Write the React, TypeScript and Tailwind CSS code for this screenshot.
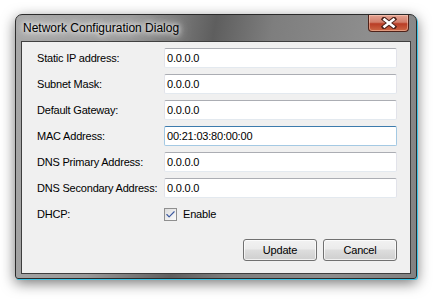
import { Check } from 'lucide-react';

const fields = [
  { label: 'Static IP address:', value: '0.0.0.0' },
  { label: 'Subnet Mask:', value: '0.0.0.0' },
  { label: 'Default Gateway:', value: '0.0.0.0' },
  { label: 'MAC Address:', value: '00:21:03:80:00:00', focused: true },
  { label: 'DNS Primary Address:', value: '0.0.0.0' },
  { label: 'DNS Secondary Address:', value: '0.0.0.0' },
];

const CloseGlyph = () => (
  <svg width="16" height="12" viewBox="0 0 16 12">
    <path
      d="M3 2 L13 10 M13 2 L3 10"
      stroke="#4a2018"
      strokeWidth="4.5"
      strokeLinecap="square"
      fill="none"
    />
    <path
      d="M3.5 2.5 L12.5 9.5 M12.5 2.5 L3.5 9.5"
      stroke="#ffffff"
      strokeWidth="2.6"
      strokeLinecap="square"
      fill="none"
    />
  </svg>
);

const VistaButton = ({ children }: { children: string }) => (
  <button className="w-[74px] h-[22px] rounded-[3px] border border-[#707070] bg-[linear-gradient(to_bottom,#f2f2f2_0%,#ebebeb_45%,#dddddd_50%,#cfcfcf_100%)] shadow-[inset_0_0_0_1px_rgba(255,255,255,0.7)] text-[11px] tracking-[-0.2px] text-black leading-none">
    {children}
  </button>
);

export default function App() {
  return (
    <div className="w-[436px] h-[299px] bg-white overflow-hidden font-['Liberation_Sans',Arial,sans-serif]">
      {/* Window frame */}
      <div className="ml-[15px] mt-[14px] w-[402px] h-[265px] flex flex-col rounded-t-[7px] rounded-b-[3px] border border-[#2a2a2a] bg-[linear-gradient(100deg,#a8a8a8_0%,#9a9a9a_26%,#5e5e5e_45%,#7e7e7e_58%,#8e8e8e_80%,#828282_100%)] shadow-[1px_1px_0_#3cc4e6,0_4px_14px_rgba(0,0,0,0.55)]">
        {/* Title bar */}
        <div className="relative h-[26px] shrink-0 flex items-center pl-[7px]">
          <span className="text-[12px] text-black [text-shadow:0_0_5px_#ffffff,0_0_9px_#ffffff,0_0_14px_rgba(255,255,255,0.8)]">
            Network Configuration Dialog
          </span>
          <div className="absolute right-[7px] top-0 w-[41px] h-[17px] flex items-center justify-center rounded-b-[4px] border border-t-0 border-[#4e2219] bg-[linear-gradient(to_bottom,#e5a393_0%,#d17e6a_45%,#b93d25_55%,#cc6846_100%)] shadow-[inset_0_0_0_1px_rgba(255,220,200,0.45)]">
            <CloseGlyph />
          </div>
        </div>

        {/* Client area */}
        <div className="mx-[5px] mb-[4px] flex-1 border border-[#3e3e3e] bg-[#f0f0f0] pl-[15px] pr-[13px] pt-[6px] flex flex-col">
          <div className="flex flex-col gap-[6px]">
            {fields.map((f) => (
              <div key={f.label} className="flex items-center h-[20px]">
                <span className="w-[127px] text-[11px] tracking-[-0.2px] text-black">{f.label}</span>
                <div
                  className={
                    f.focused
                      ? 'flex-1 h-[20px] flex items-center pl-[2px] bg-white rounded-[2px] border border-[#a4c9e3] border-t-[#3d7bad] text-[11px] tracking-[-0.2px] text-black'
                      : 'flex-1 h-[20px] flex items-center pl-[2px] bg-white rounded-[2px] border border-[#e2e3ea] border-t-[#abadb3] border-b-[#e3e9ef] text-[11px] tracking-[-0.2px] text-black'
                  }
                >
                  {f.value}
                </div>
              </div>
            ))}
            <div className="flex items-center h-[20px]">
              <span className="w-[127px] text-[11px] tracking-[-0.2px] text-black">DHCP:</span>
              <div className="flex items-center gap-[6px]">
                <div className="w-[13px] h-[13px] border border-[#8f8f8f] bg-[linear-gradient(135deg,#dcdcdc,#fbfbfb)] flex items-center justify-center">
                  <Check className="w-[11px] h-[11px] text-[#3d5aa0]" strokeWidth={2.5} />
                </div>
                <span className="text-[11px] tracking-[-0.2px] text-black">Enable</span>
              </div>
            </div>
          </div>
          <div className="mt-[15px] flex justify-end gap-[6px]">
            <VistaButton>Update</VistaButton>
            <VistaButton>Cancel</VistaButton>
          </div>
        </div>
      </div>
    </div>
  );
}
